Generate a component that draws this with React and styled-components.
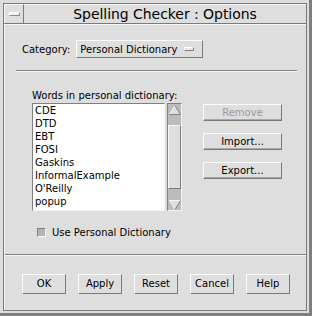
import styled, { createGlobalStyle } from 'styled-components'

const words = ['CDE', 'DTD', 'EBT', 'FOSI', 'Gaskins', 'InformalExample', "O'Reilly", 'popup']
const bottomButtons = ['OK', 'Apply', 'Reset', 'Cancel', 'Help']

const GlobalStyle = createGlobalStyle`
  html, body {
    margin: 0;
    padding: 0;
    background: #dedede;
  }
  body {
    font-family: "DejaVu Sans", sans-serif;
    font-size: 10px;
    color: #000;
  }
`

export default function App() {
  return (
    <>
      <GlobalStyle />
      <Window>
        <Frame>
          <TitleBar>
            <MenuBox><MenuGlyph /></MenuBox>
            <Title>Spelling Checker : Options</Title>
          </TitleBar>

          <Panel>
            <CategoryRow>
              <Label>Category:</Label>
              <OptionMenu>
                Personal Dictionary
                <Indicator />
              </OptionMenu>
            </CategoryRow>

            <Separator inset />

            <WordsSection>
              <Label>Words in personal dictionary:</Label>
              <ListRow>
                <ListGroup>
                  <List>
                    {words.map(w => <Item key={w}>{w}</Item>)}
                  </List>
                  <ScrollBar>
                    <Arrow>
                      <svg width="12" height="10" viewBox="0 0 12 10">
                        <polygon points="6,0.5 11.5,9.5 0.5,9.5" fill="#dedede" />
                        <line x1="6" y1="0.5" x2="0.5" y2="9.5" stroke="#f8f8f8" />
                        <line x1="6" y1="0.5" x2="11.5" y2="9.5" stroke="#808080" />
                        <line x1="0.5" y1="9.5" x2="11.5" y2="9.5" stroke="#808080" />
                      </svg>
                    </Arrow>
                    <Trough>
                      <Thumb />
                    </Trough>
                    <Arrow>
                      <svg width="12" height="10" viewBox="0 0 12 10">
                        <polygon points="0.5,0.5 11.5,0.5 6,9.5" fill="#dedede" />
                        <line x1="0.5" y1="0.5" x2="11.5" y2="0.5" stroke="#f8f8f8" />
                        <line x1="0.5" y1="0.5" x2="6" y2="9.5" stroke="#f8f8f8" />
                        <line x1="11.5" y1="0.5" x2="6" y2="9.5" stroke="#808080" />
                      </svg>
                    </Arrow>
                  </ScrollBar>
                </ListGroup>

                <SideButtons>
                  <SideButton disabled>Remove</SideButton>
                  <SideButton>Import...</SideButton>
                  <SideButton>Export...</SideButton>
                </SideButtons>
              </ListRow>

              <CheckRow>
                <CheckBox />
                <span>Use Personal Dictionary</span>
              </CheckRow>
            </WordsSection>

            <Separator />

            <ButtonBar>
              {bottomButtons.map(b => <DialogButton key={b}>{b}</DialogButton>)}
            </ButtonBar>
          </Panel>
        </Frame>
      </Window>
    </>
  )
}

const Window = styled.div`
  width: 312px;
  height: 316px;
  box-sizing: border-box;
  padding: 3px 2px 2px 3px;
  border-right: 3px solid #7e7e7e;
  border-bottom: 3px solid #7e7e7e;
  background: #dedede;
  display: flex;
`

const Frame = styled.div`
  flex: 1;
  display: flex;
  flex-direction: column;
  border: 1px solid #7a7a7a;
`

const TitleBar = styled.div`
  height: 19px;
  display: flex;
  border-bottom: 1px solid #7a7a7a;
`

const MenuBox = styled.div`
  width: 18px;
  border-right: 1px solid #7a7a7a;
  border-top: 1px solid #f6f6f6;
  border-left: 1px solid #f6f6f6;
  display: flex;
  align-items: center;
  justify-content: center;
`

const MenuGlyph = styled.div`
  width: 9px;
  height: 2px;
  background: #f0f0f0;
  border: 1px solid #8a8a8a;
  border-top-color: #ffffff;
  border-left-color: #ffffff;
`

const Title = styled.div`
  flex: 1;
  border-top: 1px solid #f6f6f6;
  text-align: center;
  font-size: 14px;
  line-height: 18px;
  letter-spacing: -0.05px;
`

const Panel = styled.div`
  flex: 1;
  display: flex;
  flex-direction: column;
  border-left: 1px solid #f6f6f6;
  border-top: 1px solid #f6f6f6;
`

const CategoryRow = styled.div`
  display: flex;
  align-items: center;
  margin: 15px 0 0 17px;
  gap: 6px;
`

const Label = styled.div`
  line-height: 13px;
  white-space: nowrap;
`

const OptionMenu = styled.div`
  width: 122px;
  height: 16px;
  box-sizing: content-box;
  display: flex;
  align-items: center;
  padding-left: 3px;
  gap: 7px;
  border: 1px solid;
  border-color: #fafafa #7a7a7a #7a7a7a #fafafa;
  white-space: nowrap;
`

const Indicator = styled.div`
  width: 8px;
  height: 2px;
  background: #e8e8e8;
  border: 1px solid #808080;
  border-top-color: #ffffff;
  border-left-color: #ffffff;
`

const Separator = styled.div`
  height: 1px;
  background: #808080;
  border-bottom: 1px solid #f6f6f6;
  margin: ${p => (p.inset ? '12px 9px 0 11px' : '15px 0 0 0')};
`

const WordsSection = styled.div`
  display: flex;
  flex-direction: column;
  margin: 17px 0 0 27px;
`

const ListRow = styled.div`
  display: flex;
  margin-top: 1px;
  gap: 21px;
`

const ListGroup = styled.div`
  display: flex;
  gap: 2px;
`

const List = styled.div`
  width: 129px;
  height: 106px;
  background: #fff;
  border: 1px solid;
  border-color: #808080 #f4f4f4 #f4f4f4 #808080;
  padding-left: 2px;
`

const Item = styled.div`
  line-height: 13px;
  white-space: nowrap;
`

const ScrollBar = styled.div`
  width: 13px;
  height: 106px;
  display: flex;
  flex-direction: column;
  border: 1px solid;
  border-color: #808080 #f4f4f4 #f4f4f4 #808080;
  background: #bcbcbc;
`

const Arrow = styled.div`
  height: 11px;
  display: flex;
  align-items: center;
  justify-content: center;
  background: #bcbcbc;
`

const Trough = styled.div`
  flex: 1;
  display: flex;
  flex-direction: column;
  padding-top: 10px;
`

const Thumb = styled.div`
  height: 62px;
  background: #dedede;
  border: 1px solid;
  border-color: #f6f6f6 #7a7a7a #7a7a7a #f6f6f6;
`

const SideButtons = styled.div`
  display: flex;
  flex-direction: column;
  gap: 12px;
  padding-top: 1px;
`

const SideButton = styled.div`
  width: 77px;
  height: 15px;
  line-height: 15px;
  text-align: center;
  border: 1px solid;
  border-color: #fafafa #7a7a7a #7a7a7a #fafafa;
  box-shadow: inset 0 -1px 0 #a8a8a8;
  color: ${p => (p.disabled ? '#9a9a9a' : '#000')};
`

const CheckRow = styled.div`
  display: flex;
  align-items: center;
  gap: 6px;
  margin: 15px 0 0 5px;
  line-height: 13px;
`

const CheckBox = styled.div`
  width: 7px;
  height: 7px;
  background: #b4b4b4;
  border: 1px solid;
  border-color: #808080 #f8f8f8 #f8f8f8 #808080;
`

const ButtonBar = styled.div`
  display: flex;
  gap: 12px;
  margin: 18px 0 0 17px;
`

const DialogButton = styled.div`
  width: 42px;
  height: 18px;
  line-height: 18px;
  text-align: center;
  border: 1px solid;
  border-color: #fafafa #7a7a7a #7a7a7a #fafafa;
`
